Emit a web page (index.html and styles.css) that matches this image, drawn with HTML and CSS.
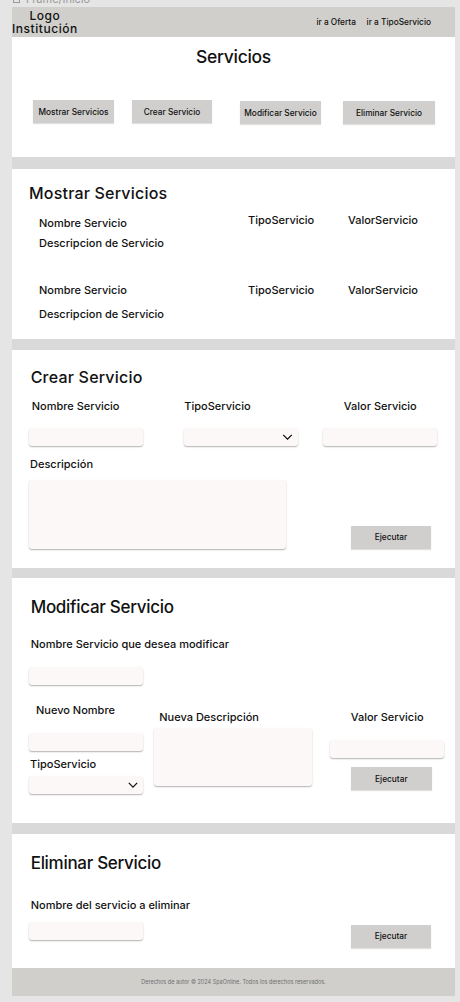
FILE: index.html
```html
<!DOCTYPE html>
<html lang="es">
<head>
<meta charset="utf-8">
<title>Servicios</title>
<link rel="stylesheet" href="styles.css">
</head>
<body>
<div class="frame-label"><span class="frame-label-text"><span class="frame-icon"></span>Frame/Inicio</span></div>
<div class="page">
  <header class="topbar">
    <div class="logo"><span class="logo-line">Logo</span><span class="logo-line">Institución</span></div>
    <nav class="nav">
      <a href="#" class="nav-link">ir a Oferta</a>
      <a href="#" class="nav-link">ir a TipoServicio</a>
    </nav>
  </header>

  <section class="hero">
    <h1 class="hero-title">Servicios</h1>
    <div class="tabs">
      <button class="btn tab">Mostrar Servicios</button>
      <button class="btn tab tab-crear">Crear Servicio</button>
      <button class="btn tab tab-mod">Modificar Servicio</button>
      <button class="btn tab tab-elim">Eliminar Servicio</button>
    </div>
  </section>

  <section class="panel panel-mostrar">
    <h2 class="panel-title">Mostrar Servicios</h2>
    <div class="item item-first">
      <div class="item-main">
        <div class="label">Nombre Servicio</div>
        <div class="label item-desc">Descripcion de Servicio</div>
      </div>
      <div class="label">TipoServicio</div>
      <div class="label">ValorServicio</div>
    </div>
    <div class="item item-second">
      <div class="item-main">
        <div class="label">Nombre Servicio</div>
        <div class="label item-desc">Descripcion de Servicio</div>
      </div>
      <div class="label">TipoServicio</div>
      <div class="label">ValorServicio</div>
    </div>
  </section>

  <section class="panel panel-crear">
    <h2 class="panel-title title-crear">Crear Servicio</h2>
    <div class="crear-grid">
      <div class="label crear-l1">Nombre Servicio</div>
      <div class="label">TipoServicio</div>
      <div class="label crear-l3">Valor Servicio</div>
      <input class="field" type="text">
      <div class="field select"><svg class="chev" viewBox="0 0 12 7" width="11" height="6"><polyline points="1,1 6,6 11,1" fill="none" stroke="#111" stroke-width="1.5"/></svg></div>
      <input class="field" type="text">
    </div>
    <div class="label crear-desc-label">Descripción</div>
    <div class="crear-bottom">
      <textarea class="area area-crear"></textarea>
      <button class="btn run">Ejecutar</button>
    </div>
  </section>

  <section class="panel panel-mod">
    <h2 class="panel-title title-big">Modificar Servicio</h2>
    <div class="label mod-q">Nombre Servicio que desea modificar</div>
    <input class="field mod-target" type="text">
    <div class="mod-cols">
      <div class="mod-col1">
        <div class="label mod-l-nombre">Nuevo Nombre</div>
        <input class="field" type="text">
        <div class="label mod-l-tipo">TipoServicio</div>
        <div class="field select mod-select"><svg class="chev" viewBox="0 0 12 7" width="10" height="6"><polyline points="1,1 6,6 11,1" fill="none" stroke="#111" stroke-width="1.5"/></svg></div>
      </div>
      <div class="mod-col2">
        <div class="label mod-l-desc">Nueva Descripción</div>
        <textarea class="area area-mod"></textarea>
      </div>
      <div class="mod-col3">
        <div class="label mod-l-valor">Valor Servicio</div>
        <input class="field mod-valor" type="text">
        <button class="btn run mod-run">Ejecutar</button>
      </div>
    </div>
  </section>

  <section class="panel panel-elim">
    <h2 class="panel-title title-big">Eliminar Servicio</h2>
    <div class="label elim-q">Nombre del servicio a eliminar</div>
    <div class="elim-row">
      <input class="field" type="text">
      <button class="btn run elim-run">Ejecutar</button>
    </div>
  </section>

  <footer class="footer">Derechos de autor © 2024 SpaOnline. Todos los derechos reservados.</footer>
</div>
</body>
</html>
```

FILE: styles.css
```css
* { box-sizing: border-box; }

body {
  margin: 0;
  background: #e5e5e5;
  font-family: Inter, "Liberation Sans", sans-serif;
  color: #111;
}

.frame-label {
  height: 7px;
  overflow: hidden;
  padding-left: 13px;
}
.frame-label-text {
  display: flex;
  align-items: center;
  gap: 6px;
  margin-top: -7px;
  font-size: 11px;
  line-height: 13px;
  color: #9a9a9a;
}
.frame-icon {
  width: 7px;
  height: 7px;
  border: 1px solid #9a9a9a;
}

.page {
  margin-left: 12px;
  width: 443px;
  background: #d9d9d9;
}

/* Header */
.topbar {
  height: 30px;
  background: #d0cfcc;
  display: flex;
  align-items: center;
  justify-content: space-between;
  padding-right: 24px;
}
.logo {
  display: flex;
  flex-direction: column;
  align-items: center;
  font-size: 12px;
  letter-spacing: 0.55px;
  font-weight: 500;
}
.logo-line {
  display: block;
  height: 13px;
  line-height: 13px;
  overflow: visible;
}
.nav {
  display: flex;
  gap: 10.7px;
}
.nav-link {
  font-size: 8.3px;
  font-weight: 500;
  color: #111;
  text-decoration: none;
}

/* Hero */
.hero {
  height: 120px;
  background: #fff;
  padding-top: 8.5px;
}
.hero-title {
  margin: 0;
  font-size: 17.5px;
  letter-spacing: -0.3px;
  line-height: 22px;
  font-weight: 500;
  text-align: center;
}
.tabs {
  margin-top: 32.5px;
  display: flex;
  align-items: flex-start;
  gap: 18px;
  padding-left: 21px;
}

.btn {
  border: 0;
  padding: 0;
  background: #d0cfcd;
  font-family: inherit;
  font-size: 8.3px;
  font-weight: 500;
  color: #111;
  height: 23px;
  width: 81px;
  box-shadow: 0 1px 1px rgba(0,0,0,0.12);
}
.tab-crear { width: 80px; }
.tab-mod { margin-top: 1px; margin-left: 10px; }
.tab-elim { margin-top: 1px; margin-left: 4px; width: 92px; }

/* Panels */
.panel {
  background: #fff;
  margin-top: 11px;
}
.panel-title {
  margin: 0;
  font-size: 16px;
  letter-spacing: 0.2px;
  line-height: 20px;
  font-weight: 500;
}
.title-big {
  font-size: 17px;
  letter-spacing: -0.3px;
  line-height: 21px;
}
.label {
  font-size: 11px;
  line-height: 14px;
  font-weight: 500;
}

/* Mostrar */
.panel-mostrar {
  margin-top: 12px;
  height: 170px;
  padding: 13.5px 0 0 17px;
}
.item {
  display: grid;
  grid-template-columns: 209px 100px auto;
  padding-left: 10px;
}
.item-first { margin-top: 10px; }
.item-first .item-main { padding-top: 3.3px; }
.item-first .item-desc { margin-top: 6px; }
.item-second { margin-top: 33.7px; }
.item-second .item-desc { margin-top: 10px; }

/* Inputs */
.field {
  display: block;
  width: 114px;
  height: 18px;
  border: 0;
  padding: 0 6px;
  border-radius: 3px;
  background: #fcf8f7;
  box-shadow: 0 1px 1.5px rgba(0,0,0,0.3);
  font-family: inherit;
  font-size: 9px;
}
.select {
  display: flex;
  align-items: center;
  justify-content: flex-end;
  padding-right: 5px;
}
.area {
  display: block;
  border: 0;
  resize: none;
  border-radius: 3px;
  background: #fcf8f7;
  box-shadow: 0 1px 1.5px rgba(0,0,0,0.3);
  font-family: inherit;
}

/* Crear */
.panel-crear {
  height: 218px;
  padding: 16.5px 23.7px 0 17.3px;
}
.title-crear { margin-left: 1.4px; }
.crear-grid {
  margin-top: 12.2px;
  display: grid;
  grid-template-columns: 155px 139px 114px;
  row-gap: 15.6px;
}
.crear-l1 { padding-left: 2.4px; }
.crear-l3 { text-align: center; }
.crear-desc-label {
  margin-top: 10.7px;
  margin-left: 0.7px;
}
.crear-bottom {
  margin-top: 9px;
  display: flex;
  align-items: flex-end;
  justify-content: space-between;
}
.area-crear {
  width: 256.7px;
  height: 69px;
}
.run { width: 80.7px; }

/* Modificar */
.panel-mod {
  margin-top: 10px;
  height: 245px;
  padding: 19.4px 0 0 17.3px;
}
.panel-mod .panel-title { margin-left: 1.4px; }
.mod-q {
  margin-top: 18.6px;
  margin-left: 1.4px;
}
.mod-target { margin-top: 15.7px; }
.mod-cols {
  margin-top: 18px;
  display: flex;
  align-items: flex-start;
}
.mod-col1 { width: 114px; }
.mod-l-nombre {
  padding-left: 6.7px;
  margin-bottom: 16.3px;
}
.mod-l-tipo {
  margin-top: 6px;
  padding-left: 0.7px;
}
.mod-select { margin-top: 5px; }
.mod-col2 {
  margin-left: 10.7px;
  margin-top: 7.3px;
}
.mod-l-desc { padding-left: 5.3px; }
.area-mod {
  margin-top: 4.4px;
  width: 158px;
  height: 57.3px;
}
.mod-col3 {
  margin-left: 18px;
  margin-top: 7.3px;
  width: 114.3px;
}
.mod-l-valor { text-align: center; }
.mod-valor {
  margin-top: 15.7px;
  width: 114.3px;
}
.mod-run {
  margin-top: 9.7px;
  margin-left: 21px;
}

/* Eliminar */
.panel-elim {
  height: 134px;
  padding: 19.4px 23.7px 0 17.3px;
}
.panel-elim .panel-title { margin-left: 1.4px; }
.elim-q {
  margin-top: 23.3px;
  margin-left: 1.4px;
}
.elim-row {
  margin-top: 10.6px;
  display: flex;
  align-items: flex-start;
  justify-content: space-between;
}
.elim-run { margin-top: 2.7px; }

/* Footer */
.footer {
  height: 28px;
  background: #d0cfcc;
  display: flex;
  align-items: center;
  justify-content: center;
  font-size: 5.5px;
  color: #6e6e6e;
}
```
